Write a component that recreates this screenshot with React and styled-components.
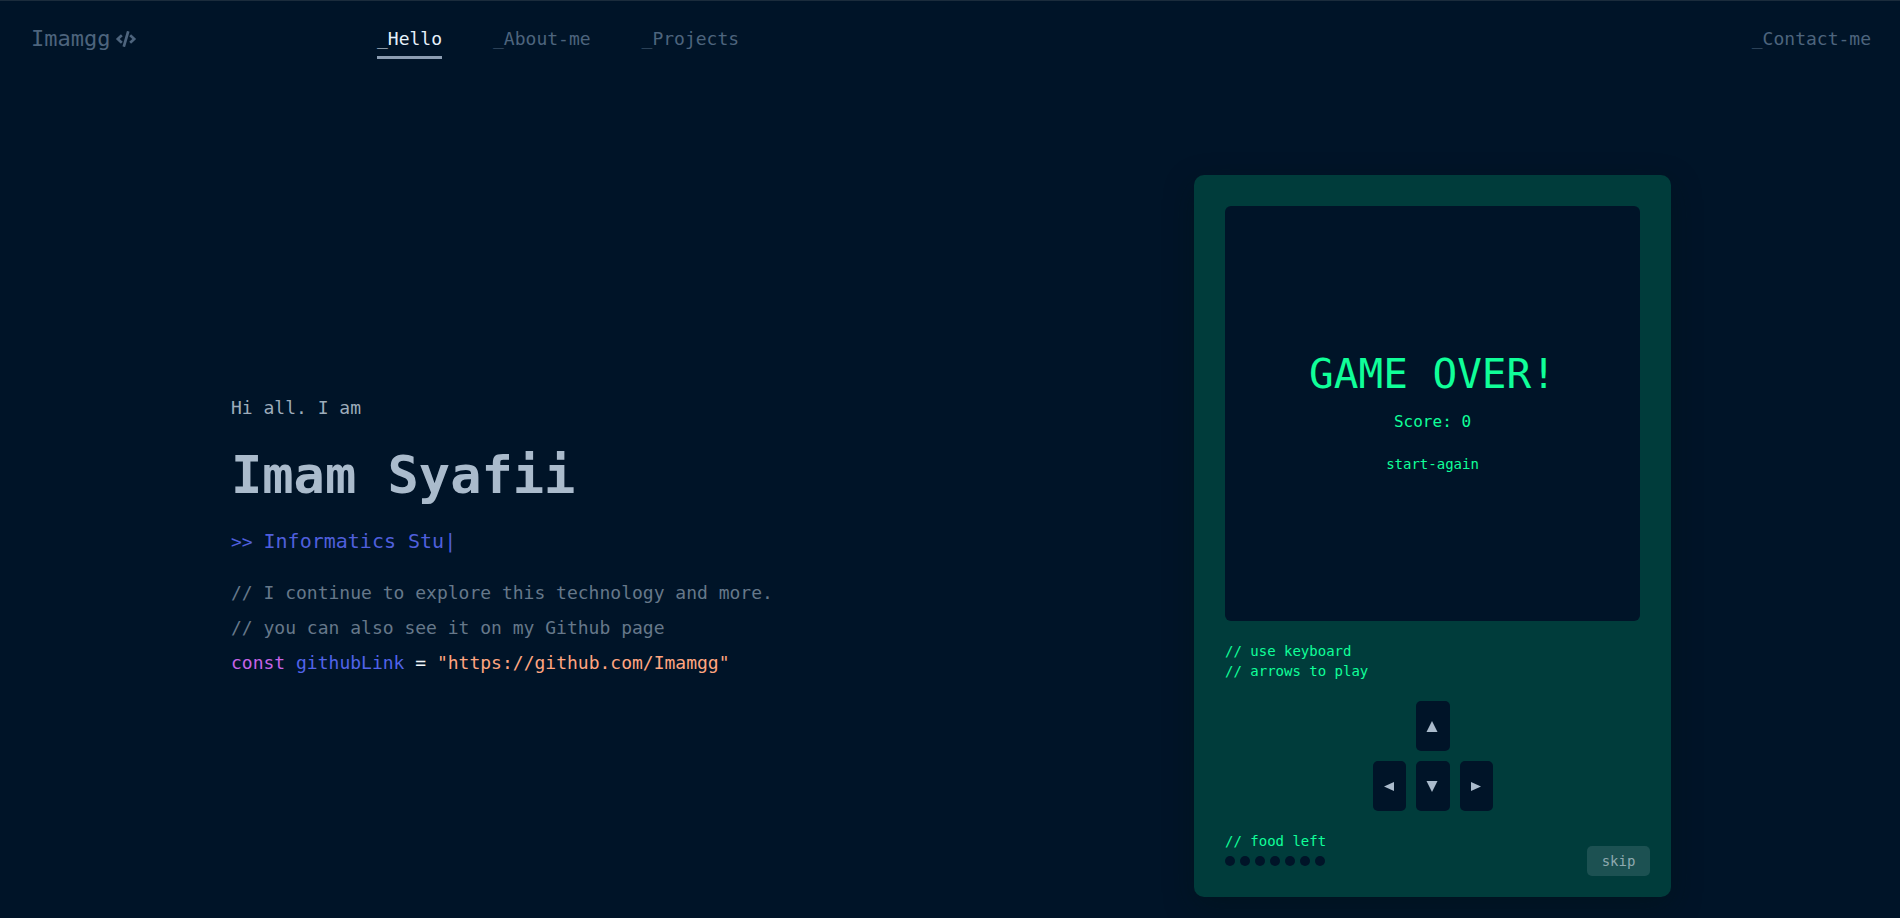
import React from "react";
import styled, { createGlobalStyle } from "styled-components";
import { FaCode } from "react-icons/fa";

const colors = {
  bg: "#001428",
  line: "#1b2c3c",
  muted: "#4d647d",
  text: "#aabbcc",
  soft: "#9dacbb",
  comment: "#66788a",
  indigo: "#4f5fdc",
  purple: "#c763e6",
  blue: "#5163ea",
  orange: "#ffa580",
  green: "#10ff99",
  card: "#003c3b",
};

const GlobalStyle = createGlobalStyle`
  *, *::before, *::after { box-sizing: border-box; }
  body {
    margin: 0;
    background: ${colors.bg};
    color: ${colors.text};
    font-family: "DejaVu Sans Mono", "Liberation Mono", monospace;
    font-size: 18px;
  }
  h1, p { margin: 0; }
  a { color: inherit; text-decoration: none; }
  button { font: inherit; border: 0; padding: 0; background: none; cursor: pointer; }
`;

const Page = styled.div`
  display: flex;
  flex-direction: column;
  min-height: 100vh;
  border-top: 1px solid ${colors.line};
`;

const Header = styled.header`
  display: flex;
  align-items: center;
  height: 76px;
  padding: 0 29px 0 31px;
`;

const Logo = styled.a`
  display: flex;
  align-items: center;
  gap: 6px;
  width: 346px;
  font-size: 22px;
  line-height: 28px;
  && { color: ${colors.muted}; }
`;

const Nav = styled.nav`
  display: flex;
  flex: 1;
  gap: 51px;
`;

const NavLink = styled.a`
  padding: 8px 0 5px;
  line-height: 24px;
  border-bottom: 3px solid ${(p) => (p.$active ? "#8c9db2" : "transparent")};
  && { color: ${(p) => (p.$active ? "#e6f1fb" : colors.muted)}; }
  &:last-child { margin-left: auto; }
`;

const Main = styled.main`
  display: flex;
  flex: 1;
  align-items: center;
  justify-content: space-between;
  gap: 40px;
  padding: 77px 229px 0 231px;
`;

const Intro = styled.section`
  display: flex;
  flex-direction: column;
  padding-top: 2px;
`;

const Greeting = styled.p`
  line-height: 28px;
  color: ${colors.soft};
`;

const Name = styled.h1`
  margin: 21px 0 20px;
  font-size: 52px;
  font-weight: 700;
  line-height: 64px;
`;

const Role = styled.p`
  margin-bottom: 19px;
  font-size: 20px;
  line-height: 28px;
  color: ${colors.indigo};
`;

const Prompt = styled.span`
  font-size: 18px;
  white-space: pre;
`;

const CodeLine = styled.p`
  line-height: 35px;
  color: ${(p) => p.$color || colors.comment};
`;

const Token = styled.span`
  color: ${(p) => p.$color};
`;

const RepoLink = styled.a`
  && { color: ${colors.orange}; }
`;

const GameCard = styled.section`
  flex: none;
  width: 477px;
  padding: 31px 31px 21px;
  border-radius: 10px;
  background: ${colors.card};
  box-shadow: 0 10px 30px rgba(0, 20, 16, 0.35);
  color: ${colors.green};
  font-size: 14px;
  line-height: 20px;
`;

const Screen = styled.div`
  display: flex;
  flex-direction: column;
  align-items: center;
  justify-content: center;
  aspect-ratio: 1;
  border-radius: 6px;
  background: ${colors.bg};
`;

const GameOver = styled.p`
  margin-bottom: 8px;
  font-size: 41px;
  line-height: 52px;
`;

const Score = styled.p`
  font-size: 16px;
  line-height: 28px;
`;

const StartButton = styled.button`
  margin-top: 13px;
  line-height: 30px;
  color: ${colors.green};
`;

const Hint = styled.p`
  margin: 20px 0;
`;

const Pad = styled.div`
  display: grid;
  grid-template-columns: 33px 34px 33px;
  grid-template-areas: ". up ." "left down right";
  gap: 10px;
  justify-content: center;
`;

const Key = styled.button`
  grid-area: ${(p) => p.$area};
  display: flex;
  align-items: center;
  justify-content: center;
  height: 50px;
  border-radius: 5px;
  && { background: ${colors.bg}; }
  color: ${colors.text};
`;

const Footer = styled.div`
  display: flex;
  align-items: flex-end;
  justify-content: space-between;
  height: 45px;
  margin: 20px -10px 0 0;
`;

const Food = styled.div`
  align-self: flex-start;
`;

const Dots = styled.div`
  display: flex;
  gap: 5px;
  margin-top: 5px;
`;

const Dot = styled.span`
  width: 10px;
  height: 10px;
  border-radius: 50%;
  background: ${colors.bg};
`;

const SkipButton = styled.button`
  width: 63px;
  height: 30px;
  border-radius: 5px;
  && { background: #1c5152; }
  color: #8fa9af;
`;

const arrows = [
  { area: "up", label: "Up", d: "M5 0L10.5 11H-0.5Z" },
  { area: "left", label: "Left", d: "M0 5.5L10 1V10Z" },
  { area: "down", label: "Down", d: "M-0.5 0H10.5L5 11Z" },
  { area: "right", label: "Right", d: "M0 1L10 5.5L0 10Z" },
];

export default function App() {
  return (
    <Page>
      <GlobalStyle />
      <Header>
        <Logo href="#home">
          Imamgg
          <FaCode size={20} aria-hidden="true" />
        </Logo>
        <Nav>
          <NavLink href="#hello" $active>_Hello</NavLink>
          <NavLink href="#about">_About-me</NavLink>
          <NavLink href="#projects">_Projects</NavLink>
          <NavLink href="#contact">_Contact-me</NavLink>
        </Nav>
      </Header>
      <Main>
        <Intro>
          <Greeting>Hi all. I am</Greeting>
          <Name>Imam Syafii</Name>
          <Role>
            <Prompt>{">> "}</Prompt>
            Informatics Stu|
          </Role>
          <CodeLine>// I continue to explore this technology and more.</CodeLine>
          <CodeLine>// you can also see it on my Github page</CodeLine>
          <CodeLine $color="#f2f6fa">
            <Token $color={colors.purple}>const</Token>{" "}
            <Token $color={colors.blue}>githubLink</Token> ={" "}
            <RepoLink href="#github">"https://github.com/Imamgg"</RepoLink>
          </CodeLine>
        </Intro>
        <GameCard>
          <Screen>
            <GameOver>GAME OVER!</GameOver>
            <Score>Score: 0</Score>
            <StartButton type="button">start-again</StartButton>
          </Screen>
          <Hint>
            // use keyboard
            <br />
            // arrows to play
          </Hint>
          <Pad>
            {arrows.map((a) => (
              <Key key={a.area} type="button" $area={a.area} aria-label={a.label}>
                <svg width="11" height="11" viewBox="0 0 11 11" fill="currentColor" overflow="visible" aria-hidden="true">
                  <path d={a.d} />
                </svg>
              </Key>
            ))}
          </Pad>
          <Footer>
            <Food>
              <p>// food left</p>
              <Dots>
                {Array.from({ length: 7 }, (_, i) => (
                  <Dot key={i} />
                ))}
              </Dots>
            </Food>
            <SkipButton type="button">skip</SkipButton>
          </Footer>
        </GameCard>
      </Main>
    </Page>
  );
}
